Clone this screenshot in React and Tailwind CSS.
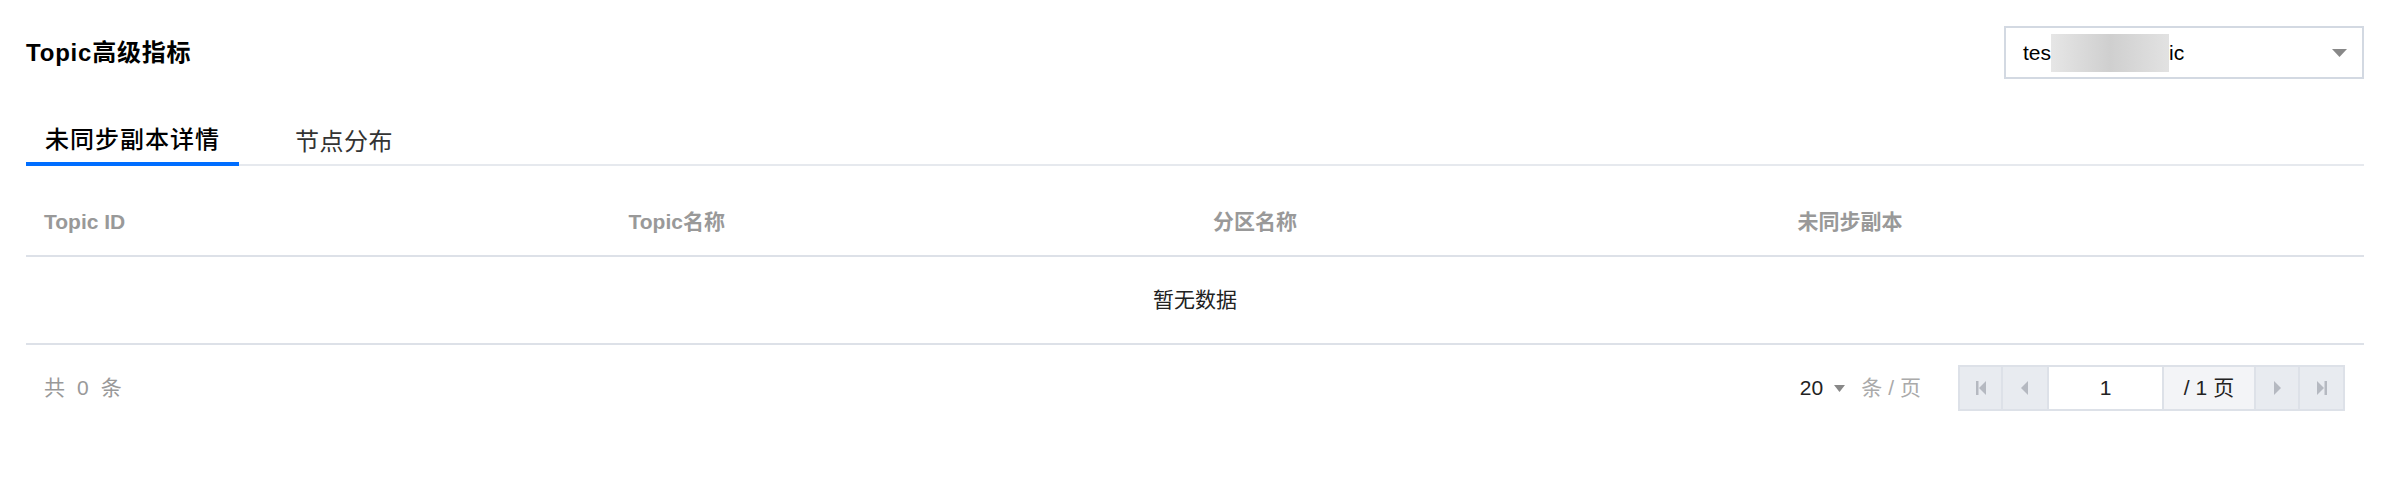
import { useState } from 'react';

const columns = ['Topic ID', 'Topic名称', '分区名称', '未同步副本'];

function Triangle({ dir = 'left', bar = false }) {
  // small pager glyphs: triangle with optional end bar
  const left = dir === 'left';
  return (
    <svg width="12" height="14" viewBox="0 0 12 14" className="text-[#b5b9c1]">
      {bar && left && <rect x="1" y="0" width="2.5" height="14" fill="currentColor" />}
      {bar && !left && <rect x="8.5" y="0" width="2.5" height="14" fill="currentColor" />}
      {left ? (
        <polygon points={bar ? '11,0 11,14 4,7' : '9,0 9,14 2,7'} fill="currentColor" />
      ) : (
        <polygon points={bar ? '1,0 1,14 8,7' : '3,0 3,14 10,7'} fill="currentColor" />
      )}
    </svg>
  );
}

function Pager() {
  const [page, setPage] = useState('1');
  return (
    <div className="flex h-[46px] border-2 border-[#dde1e8] text-[21px] text-[#222]">
      <button className="w-[43px] flex items-center justify-center bg-[#e8ebf0] border-r-2 border-[#dde1e8]">
        <Triangle dir="left" bar />
      </button>
      <button className="w-[46px] flex items-center justify-center bg-[#e8ebf0] border-r-2 border-[#dde1e8]">
        <Triangle dir="left" />
      </button>
      <input
        value={page}
        onChange={(e) => setPage(e.target.value)}
        className="w-[115px] h-full text-center bg-white border-r-2 border-[#dde1e8] outline-none"
      />
      <div className="w-[92px] flex items-center justify-center gap-[6px] bg-[#f3f4f7] border-r-2 border-[#dde1e8]">
        <span>/ 1</span>
        <span>页</span>
      </div>
      <button className="w-[44px] flex items-center justify-center bg-[#e8ebf0] border-r-2 border-[#dde1e8]">
        <Triangle dir="right" />
      </button>
      <button className="w-[43px] flex items-center justify-center bg-[#e8ebf0]">
        <Triangle dir="right" bar />
      </button>
    </div>
  );
}

export default function App() {
  const [tab, setTab] = useState(0);

  return (
    <div className="min-h-screen bg-white pl-[26px] pr-[33px] pt-[26px] font-['Liberation_Sans','Noto_Sans_CJK_SC',sans-serif] text-[#000]">
      {/* header */}
      <div className="flex items-center justify-between h-[53px]">
        <h1 className="text-[24px] font-bold tracking-[0.8px]">Topic高级指标</h1>
        <div className="w-[360px] h-[53px] flex items-center justify-between border-2 border-[#d3d9e2] pl-[17px] pr-[15px] text-[21px]">
          <div className="flex items-center">
            <span>tes</span>
            <span className="inline-block w-[118px] h-[38px] bg-gradient-to-r from-[#e6e6e6] via-[#cfcfcf] to-[#e2e2e2]" />
            <span>ic</span>
          </div>
          <svg width="15" height="8" viewBox="0 0 15 8">
            <polygon points="0,0 15,0 7.5,8" fill="#888" />
          </svg>
        </div>
      </div>

      {/* tabs */}
      <div className="flex mt-[37px] border-b-2 border-[#e6e9ee]">
        {['未同步副本详情', '节点分布'].map((t, i) => (
          <button
            key={t}
            onClick={() => setTab(i)}
            className={
              i === tab
                ? 'w-[213px] h-[50px] pt-[2px] -mb-[2px] border-b-[4px] border-[#006eff] text-[24px] font-medium text-black tracking-[1px]'
                : 'ml-[36px] px-[20px] h-[50px] pt-[2px] -mb-[2px] text-[24px] text-[#333] tracking-[0.5px]'
            }
          >
            {t}
          </button>
        ))}
      </div>

      {/* table */}
      <div className="mt-[23px]">
        <div className="grid grid-cols-4 h-[68px] items-center border-b-2 border-[#dde1e8]">
          {columns.map((c) => (
            <div key={c} className="pl-[18px] text-[21px] font-bold text-[#999]">
              {c}
            </div>
          ))}
        </div>
        <div className="h-[88px] flex items-center justify-center border-b-2 border-[#dde1e8] text-[21px] text-[#222]">
          暂无数据
        </div>
      </div>

      {/* footer */}
      <div className="flex items-center justify-between h-[86px] pl-[18px] pr-[19px] text-[21px]">
        <div className="flex gap-[12px] text-[#999]">
          <span>共</span>
          <span>0</span>
          <span>条</span>
        </div>
        <div className="flex items-center">
          <span className="text-[#222]">20</span>
          <svg width="11" height="7" viewBox="0 0 11 7" className="ml-[11px]">
            <polygon points="0,0 11,0 5.5,7" fill="#888" />
          </svg>
          <span className="ml-[16px] text-[#aaa] flex gap-[6px]">
            <span>条</span>
            <span>/</span>
            <span>页</span>
          </span>
          <div className="ml-[37px]">
            <Pager />
          </div>
        </div>
      </div>
    </div>
  );
}
